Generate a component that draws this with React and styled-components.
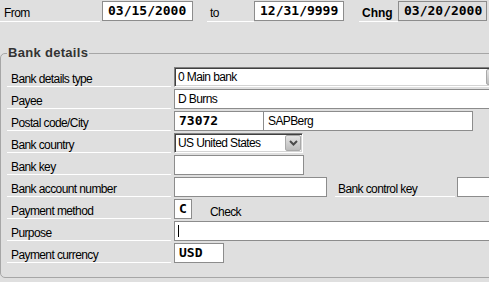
import React from "react";
import styled, { createGlobalStyle } from "styled-components";

const Global = createGlobalStyle`
  html, body { margin: 0; padding: 0; background: #dfdfdf; overflow: hidden; }
  body { font-family: "Liberation Sans", Arial, sans-serif; font-size: 12px; color: #000; }
`;

const Page = styled.div`
  width: 489px;
  height: 282px;
  overflow: hidden;
  background: #dfdfdf;
`;

const TopBar = styled.div`
  display: flex;
  align-items: flex-start;
  height: 22px;
`;

const HeadLabel = styled.div`
  box-sizing: border-box;
  flex: none;
  width: ${(p) => p.$w}px;
  margin-left: ${(p) => p.$ml || 0}px;
  height: 22px;
  padding: 0 0 1px ${(p) => p.$pl}px;
  border-bottom: 1px solid #ffffff;
  display: flex;
  align-items: flex-end;
  line-height: 14px;
  font-weight: ${(p) => (p.$bold ? 700 : 400)};
  letter-spacing: ${(p) => (p.$bold ? 0 : -0.6)}px;
  white-space: nowrap;
`;

const DateField = styled.div`
  box-sizing: border-box;
  flex: none;
  width: ${(p) => p.$w}px;
  height: 20px;
  margin-top: 1px;
  padding-left: 5px;
  border: 1px solid #8c8c8c;
  background: ${(p) => (p.$disabled ? "#dfdfdf" : "#ffffff")};
  font: bold 13px/18px "DejaVu Sans Mono", "Liberation Mono", monospace;
  white-space: nowrap;
`;

const Group = styled.fieldset`
  box-sizing: border-box;
  width: 520px;
  min-width: 0;
  margin: 23px 0 0 0;
  padding: 5px 0 13px 0;
  border: 1px solid #a6a6a6;
  border-radius: 5px;
`;

const Legend = styled.legend`
  margin-left: 6px;
  padding: 0 1px;
  font: bold 13px/16px "Liberation Sans", Arial, sans-serif;
  letter-spacing: 0.3px;
  color: #333333;
`;

const Row = styled.div`
  display: flex;
  align-items: flex-start;
  height: 22px;
`;

const RowLabel = styled.div`
  box-sizing: border-box;
  flex: none;
  width: ${(p) => p.$w || 164}px;
  margin-left: ${(p) => (p.$ml === undefined ? 6 : p.$ml)}px;
  margin-right: ${(p) => (p.$mr === undefined ? 3 : p.$mr)}px;
  height: 21px;
  padding-left: ${(p) => p.$pl || 4}px;
  border-bottom: 1px solid #ffffff;
  display: flex;
  align-items: flex-end;
  line-height: 14px;
  letter-spacing: -0.6px;
  white-space: nowrap;
`;

const Field = styled.div`
  box-sizing: border-box;
  flex: none;
  width: ${(p) => p.$w}px;
  height: 20px;
  margin-top: 1px;
  margin-left: ${(p) => p.$ml || 0}px;
  padding-left: ${(p) => (p.$mono ? 4 : 3)}px;
  border: 1px solid #8c8c8c;
  background: #ffffff;
  display: flex;
  align-items: center;
  white-space: nowrap;
  overflow: hidden;
  font: ${(p) =>
    p.$mono
      ? 'bold 13px/18px "DejaVu Sans Mono", "Liberation Mono", monospace'
      : '12px/18px "Liberation Sans", Arial, sans-serif'};
  letter-spacing: ${(p) => (p.$mono ? 0 : -0.6)}px;
`;

const SelectBox = styled.div`
  box-sizing: border-box;
  flex: none;
  width: ${(p) => p.$w}px;
  height: 20px;
  margin-top: 1px;
  padding: 0 1px 0 3px;
  border: 1px solid;
  border-color: #808080 #ffffff #ffffff #808080;
  box-shadow: inset 1px 1px 0 #404040, inset -1px -1px 0 #d4d4d4;
  background: #ffffff;
  display: flex;
  align-items: center;
  justify-content: space-between;
  line-height: 18px;
  letter-spacing: -0.6px;
  white-space: nowrap;
`;

const SelectButton = styled.div`
  box-sizing: border-box;
  flex: none;
  width: 16px;
  height: 16px;
  border: 1px solid #a9a9a9;
  border-radius: 2px;
  background: linear-gradient(#e4e4e4, #bcbcbc);
  display: flex;
  align-items: center;
  justify-content: center;
`;

const PlainText = styled.div`
  flex: none;
  margin-left: ${(p) => p.$ml || 0}px;
  height: 21px;
  display: flex;
  align-items: flex-end;
  line-height: 14px;
  letter-spacing: -0.6px;
`;

const Caret = styled.span`
  display: inline-block;
  width: 1px;
  height: 12px;
  background: #000000;
`;

const Chevron = () => (
  <svg width="9" height="6" viewBox="0 0 9 6">
    <path d="M1 1 L4.5 4.5 L8 1" fill="none" stroke="#4a4a4a" strokeWidth="2" />
  </svg>
);

const Select = ({ w, children }) => (
  <SelectBox $w={w}>
    <span>{children}</span>
    <SelectButton>
      <Chevron />
    </SelectButton>
  </SelectBox>
);

export default function App() {
  return (
    <Page>
      <Global />
      <TopBar>
        <HeadLabel $w={100} $pl={4}>From</HeadLabel>
        <DateField $w={91} style={{ marginLeft: 2 }}>03/15/2000</DateField>
        <HeadLabel $w={47} $ml={14} $pl={3}>to</HeadLabel>
        <DateField $w={90}>12/31/9999</DateField>
        <HeadLabel $w={39} $ml={15} $pl={3} $bold>Chng</HeadLabel>
        <DateField $w={89} $disabled>03/20/2000</DateField>
      </TopBar>
      <Group>
        <Legend>Bank details</Legend>
        <Row>
          <RowLabel>Bank details type</RowLabel>
          <Select w={330}>0 Main bank</Select>
        </Row>
        <Row>
          <RowLabel>Payee</RowLabel>
          <Field $w={330}>D Burns</Field>
        </Row>
        <Row>
          <RowLabel>Postal code/City</RowLabel>
          <Field $w={90} $mono>73072</Field>
          <Field $w={210} $ml={-1} style={{ paddingLeft: 4 }}>SAPBerg</Field>
        </Row>
        <Row>
          <RowLabel>Bank country</RowLabel>
          <Select w={129}>US United States</Select>
        </Row>
        <Row>
          <RowLabel>Bank key</RowLabel>
          <Field $w={130} />
        </Row>
        <Row>
          <RowLabel>Bank account number</RowLabel>
          <Field $w={153} />
          <RowLabel $w={120} $ml={8} $mr={2} $pl={3}>Bank control key</RowLabel>
          <Field $w={60} />
        </Row>
        <Row>
          <RowLabel>Payment method</RowLabel>
          <Field $w={18} $mono>C</Field>
          <PlainText $ml={18}>Check</PlainText>
        </Row>
        <Row>
          <RowLabel>Purpose</RowLabel>
          <Field $w={330}>
            <Caret />
          </Field>
        </Row>
        <Row>
          <RowLabel>Payment currency</RowLabel>
          <Field $w={50} $mono>USD</Field>
        </Row>
      </Group>
    </Page>
  );
}
